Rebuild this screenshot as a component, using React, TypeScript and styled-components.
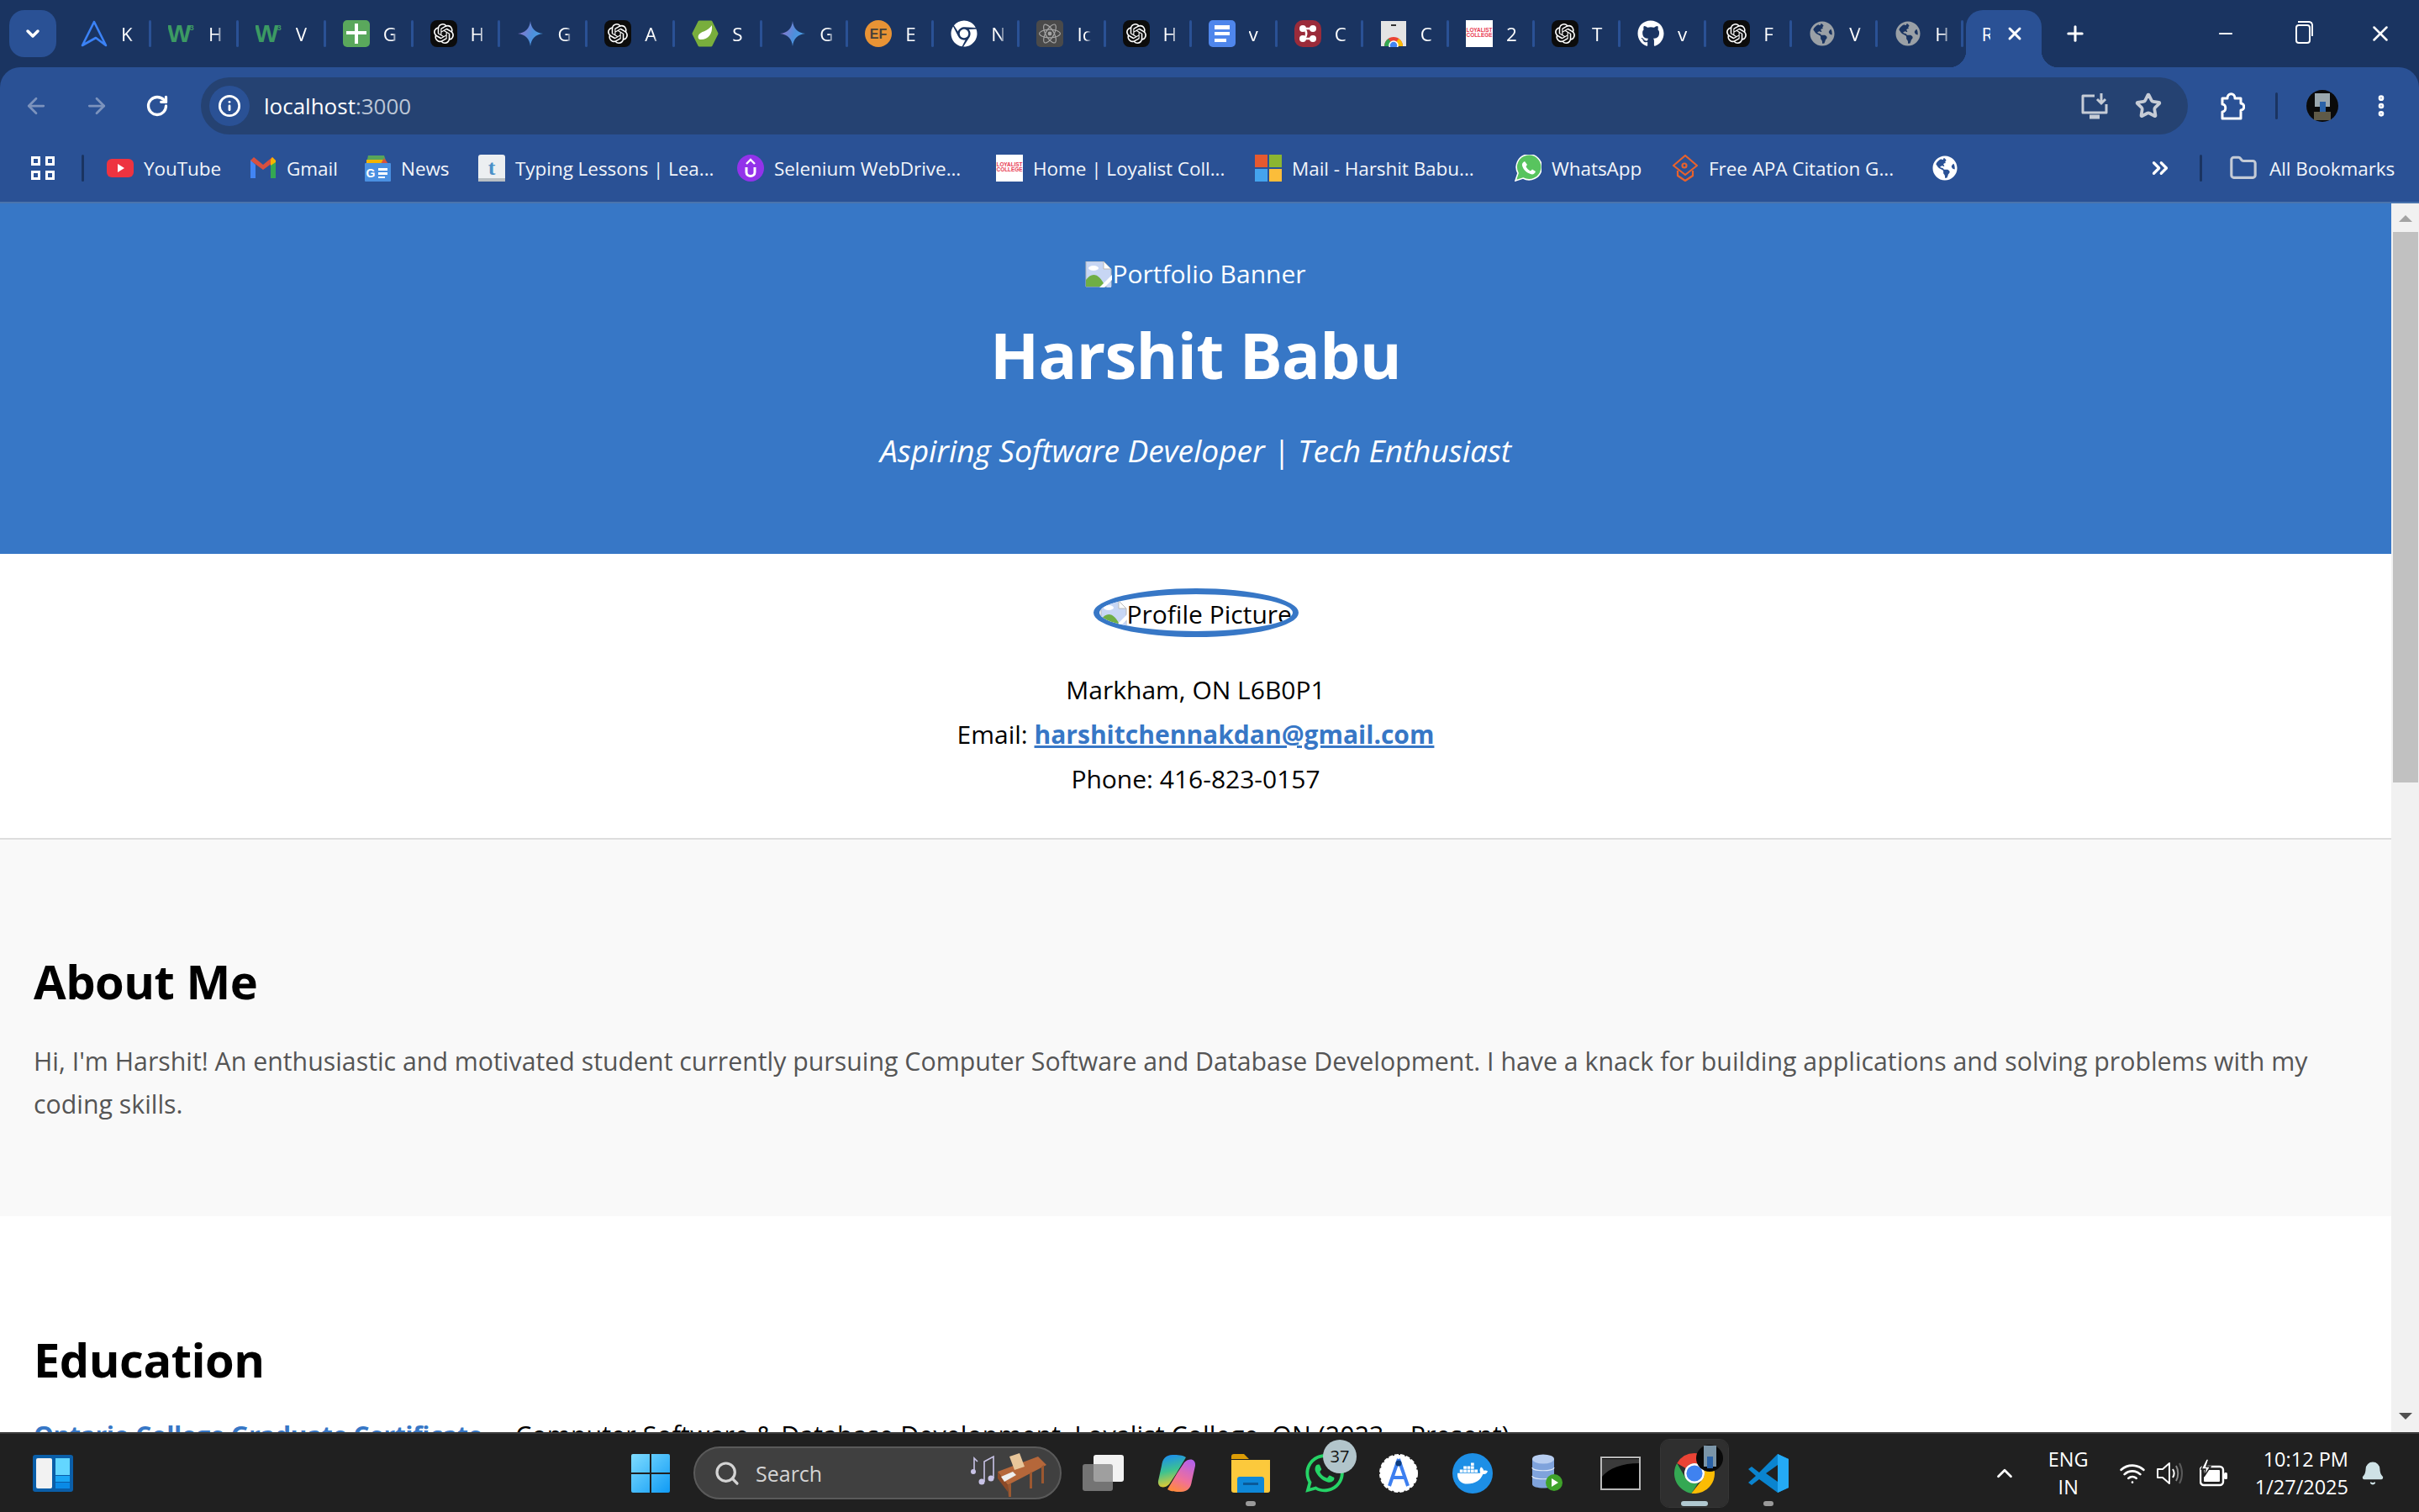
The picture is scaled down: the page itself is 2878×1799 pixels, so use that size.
import React from 'react';
import styled, { createGlobalStyle } from 'styled-components';
import {
  ArrowLeft,
  ArrowRight,
  Bell,
  ChevronDown,
  ChevronsRight,
  ChevronUp,
  EllipsisVertical,
  Folder,
  Info,
  RotateCw,
  Search,
  Star,
  Wifi,
  Minus,
  Plus,
  X,
} from 'lucide-react';
import { FaChrome, FaDocker, FaGithub, FaGlobeAmericas, FaWhatsapp } from 'react-icons/fa';
import { SiOpenai, SiReact } from 'react-icons/si';

const UI_FONT = '"Open Sans", "Noto Sans", sans-serif';

const GlobalStyle = createGlobalStyle`
  html, body {
    margin: 0;
    padding: 0;
    height: 100%;
    overflow: hidden;
    font-family: ${UI_FONT};
  }
  #root { height: 100%; }
`;

const Screen = styled.div`
  display: flex;
  flex-direction: column;
  width: 2878px;
  height: 1799px;
  overflow: hidden;
  background: #fff;
`;

/* ---------- tab strip ---------- */

const TabStrip = styled.div`
  display: flex;
  align-items: flex-end;
  height: 80px;
  flex: none;
  background: #1a3461;
`;

const TabSearchButton = styled.div`
  width: 56px;
  height: 56px;
  margin: 0 9px 12px 11px;
  flex: none;
  display: flex;
  align-items: center;
  justify-content: center;
  border-radius: 18px;
  background: #2a5195;
  color: #fff;
`;

const Tab = styled.div<{ $wide: boolean }>`
  display: flex;
  align-items: center;
  width: ${(p) => (p.$wide ? '103.9px' : '102.1px')};
  height: 80px;
  padding-left: 20px;
  box-sizing: border-box;
  flex: none;
`;

const TabIconSlot = styled.div`
  width: 32px;
  height: 32px;
  flex: none;
  display: flex;
  align-items: center;
  justify-content: center;
`;

const TabLabel = styled.div`
  width: 17px;
  margin-left: 16px;
  overflow: hidden;
  color: #fff;
  font-size: 22.5px;
  white-space: nowrap;
  mask-image: linear-gradient(to right, #000 65%, transparent);
`;

const TabSeparator = styled.div`
  width: 3px;
  height: 32px;
  margin-left: auto;
  border-radius: 2px;
  background: #2a5195;
`;

const ActiveTab = styled.div`
  position: relative;
  display: flex;
  align-items: center;
  width: 90px;
  height: 68px;
  margin-left: 3px;
  padding: 0 0 12px 18px;
  box-sizing: border-box;
  flex: none;
  border-radius: 20px 20px 0 0;
  background: #2a5195;
  color: #fff;

  &::before,
  &::after {
    content: '';
    position: absolute;
    bottom: 0;
    width: 20px;
    height: 20px;
  }
  &::before {
    left: -20px;
    background: radial-gradient(circle at 0 0, transparent 20px, #2a5195 20.5px);
  }
  &::after {
    right: -20px;
    background: radial-gradient(circle at 100% 0, transparent 20px, #2a5195 20.5px);
  }
`;

const ActiveTabLabel = styled.div`
  width: 11px;
  overflow: hidden;
  font-size: 22.5px;
  margin-right: 17px;
`;

const NewTabButton = styled.div`
  width: 56px;
  height: 80px;
  margin-left: 12px;
  display: flex;
  align-items: center;
  justify-content: center;
  color: #fff;
`;

const WindowControls = styled.div`
  display: flex;
  margin-left: auto;
  height: 80px;
`;

const WindowButton = styled.div`
  width: 92px;
  display: flex;
  align-items: center;
  justify-content: center;
  color: #fff;
`;

const RestoreGlyph = styled.div`
  position: relative;
  width: 14px;
  height: 19px;
  border: 2.5px solid #fff;
  border-radius: 4px;

  &::after {
    content: '';
    position: absolute;
    top: -6px;
    left: 1px;
    width: 16px;
    height: 16px;
    border-top: 2.5px solid #fff;
    border-right: 2.5px solid #fff;
    border-radius: 0 5px 0 0;
  }
`;

/* ---------- toolbar ---------- */

const ToolbarBacking = styled.div`
  background: #1a3461;
  flex: none;
`;

const Toolbar = styled.div`
  display: flex;
  align-items: center;
  height: 80px;
  padding: 12px 0 0 7px;
  box-sizing: border-box;
  background: #2a5195;
  border-radius: 24px 24px 0 0;
`;

const NavButton = styled.div<{ $off?: boolean }>`
  width: 72px;
  display: flex;
  justify-content: center;
  color: ${(p) => (p.$off ? '#7c93bd' : '#fff')};
`;

const AddressBar = styled.div`
  display: flex;
  align-items: center;
  width: 2364px;
  height: 68px;
  margin-left: 16px;
  padding: 0 31px 0 10px;
  box-sizing: border-box;
  flex: none;
  border-radius: 34px;
  background: #254272;
`;

const InfoChip = styled.div`
  width: 48px;
  height: 48px;
  display: flex;
  align-items: center;
  justify-content: center;
  border-radius: 24px;
  background: #2a5195;
  color: #fff;
`;

const UrlHost = styled.span`
  margin-left: 17px;
  color: #fff;
  font-size: 26px;
`;

const UrlPort = styled.span`
  color: #bcc6d6;
  font-size: 26px;
`;

const AddressActions = styled.div`
  display: flex;
  align-items: center;
  gap: 31px;
  margin-left: auto;
  color: #c6ccd6;
`;

const ToolbarActions = styled.div`
  display: flex;
  align-items: center;
  margin-left: 36px;
  color: #fff;
`;

const ToolbarDivider = styled.div`
  width: 3px;
  height: 32px;
  margin: 0 34px 0 36px;
  border-radius: 2px;
  background: #1a3461;
`;

const Kebab = styled.div`
  margin-left: 35px;
  display: flex;
`;

/* ---------- bookmarks ---------- */

const BookmarksBar = styled.div`
  display: flex;
  align-items: center;
  height: 82px;
  flex: none;
  box-sizing: border-box;
  padding-left: 37px;
  background: #2a5195;
  border-bottom: 2px solid #4a74ad;
`;

const AppsGrid = styled.div`
  display: grid;
  grid-template-columns: repeat(2, 11px);
  grid-auto-rows: 11px;
  gap: 6px;
`;

const AppsCell = styled.div`
  border: 3px solid #fff;
  box-sizing: border-box;
`;

const BarDivider = styled.div<{ $left: number; $right: number }>`
  width: 3px;
  height: 32px;
  margin: 0 ${(p) => p.$right}px 0 ${(p) => p.$left}px;
  border-radius: 2px;
  background: #1a3461;
`;

const BookmarkList = styled.div`
  display: flex;
  align-items: center;
  gap: 34px;
`;

const Bookmark = styled.div`
  display: flex;
  align-items: center;
  gap: 12px;
`;

const BookmarkText = styled.span<{ $w: number }>`
  width: ${(p) => p.$w}px;
  color: #f2f5fa;
  font-size: 22.5px;
  letter-spacing: -0.05px;
  white-space: nowrap;
`;

const OverflowButton = styled.div`
  margin-left: 226px;
  display: flex;
  color: #fff;
`;

const AllBookmarks = styled.div`
  display: flex;
  align-items: center;
  gap: 14px;
  color: #c4cbd6;
`;

/* ---------- page ---------- */

const Viewport = styled.div`
  display: flex;
  height: 1462px;
  flex: none;
  overflow: hidden;
`;

const Page = styled.main`
  width: 2845px;
  flex: none;
  color: #000;
  font-size: 30px;
  line-height: 53px;
`;

const Hero = styled.header`
  display: flex;
  flex-direction: column;
  align-items: center;
  height: 417px;
  box-sizing: border-box;
  padding-top: 67px;
  background: #3777c6;
  color: #fff;
`;

const BrokenIcon = styled.svg`
  width: 32px;
  height: 32px;
  flex: none;
`;

const AltImage = styled.div`
  display: flex;
  align-items: flex-end;
  height: 34px;
  line-height: 34px;
`;

const HeroName = styled.h1`
  margin: 29px 0 0;
  font-size: 76px;
  line-height: 100px;
  font-weight: 700;
  letter-spacing: -0.7px;
`;

const HeroTagline = styled.p`
  margin: 39px 0 0;
  font-size: 37.2px;
  line-height: 50px;
  font-style: italic;
  font-weight: 400;
  letter-spacing: -0.1px;
`;

const ProfileSection = styled.section`
  display: flex;
  flex-direction: column;
  align-items: center;
  height: 340px;
  box-sizing: border-box;
  padding-top: 41px;
  border-bottom: 2px solid #ddd;
`;

const ProfileOval = styled.div`
  display: flex;
  align-items: flex-start;
  width: 244px;
  height: 58px;
  box-sizing: border-box;
  padding: 8px 0 0 1px;
  border: 7px solid #3777c6;
  border-radius: 50%;
  overflow: hidden;
  line-height: 32px;
  white-space: nowrap;
`;

const ContactLines = styled.div`
  margin-top: 36px;
  text-align: center;
`;

const EmailLink = styled.a`
  color: #3777c6;
  font-weight: 700;
  text-decoration: underline;
`;

const Section = styled.section<{ $shaded?: boolean }>`
  padding: ${(p) => (p.$shaded ? '128px 40px 108px' : '130px 40px 0')};
  background: ${(p) => (p.$shaded ? '#f9f9f9' : '#fff')};
`;

const SectionTitle = styled.h2<{ $gap: number }>`
  margin: 0 0 ${(p) => p.$gap}px;
  font-size: 56px;
  line-height: 80px;
  font-weight: 700;
  letter-spacing: -0.5px;
`;

const Lead = styled.p`
  margin: 0;
  color: #555;
  font-size: 30.3px;
  line-height: 51.2px;
`;

const EducationLine = styled.p`
  margin: 0;
  font-size: 30.3px;
  letter-spacing: 0.1px;
`;

const Degree = styled.strong`
  margin-right: 16px;
  color: #3777c6;
  letter-spacing: -0.5px;
`;

const Scrollbar = styled.div`
  display: flex;
  flex-direction: column;
  align-items: center;
  width: 33px;
  flex: none;
  background: #f1f1f1;
`;

const ScrollArrow = styled.div<{ $down?: boolean }>`
  width: 0;
  height: 0;
  margin: ${(p) => (p.$down ? 'auto 0 15px' : '14px 0 0')};
  border-left: 8px solid transparent;
  border-right: 8px solid transparent;
  ${(p) => (p.$down ? 'border-top: 8px solid #505050;' : 'border-bottom: 8px solid #a3a3a3;')}
`;

const ScrollThumb = styled.div`
  width: 30px;
  height: 655px;
  margin: 12px 0 0 1px;
  background: #c1c1c1;
`;

/* ---------- taskbar ---------- */

const Taskbar = styled.footer`
  display: flex;
  align-items: center;
  height: 95px;
  flex: none;
  box-sizing: border-box;
  padding-left: 39px;
  background: #202020;
  border-top: 2px solid #3c3c3c;
  color: #fff;
`;

const WidgetsIcon = styled.svg`
  width: 48px;
  height: 44px;
  flex: none;
`;

const StartIcon = styled.svg`
  width: 46px;
  height: 46px;
  margin-left: 664px;
  flex: none;
`;

const SearchPill = styled.div`
  display: flex;
  align-items: center;
  justify-content: space-between;
  width: 438px;
  height: 63px;
  margin-left: 28px;
  padding: 0 16px 0 22px;
  box-sizing: border-box;
  flex: none;
  border: 2px solid #5a5a5a;
  border-radius: 32px;
  background: #404040;
`;

const SearchHint = styled.div`
  display: flex;
  align-items: center;
  gap: 18px;
  color: #d4d4d4;
  font-size: 25px;
`;

const TaskSlot = styled.div<{ $active?: boolean }>`
  position: relative;
  width: 80px;
  height: 80px;
  margin: 0 4px;
  flex: none;
  display: flex;
  align-items: center;
  justify-content: center;
  border-radius: 10px;
  background: ${(p) => (p.$active ? '#2f2f2f' : 'transparent')};
  outline: ${(p) => (p.$active ? '1px solid #363636' : 'none')};
`;

const TaskList = styled.div`
  display: flex;
  margin-left: 5px;
`;

const RunDot = styled.div<{ $wide?: boolean }>`
  position: absolute;
  left: 50%;
  bottom: 1px;
  width: ${(p) => (p.$wide ? '32px' : '12px')};
  height: 6px;
  transform: translateX(-50%);
  border-radius: 3px;
  background: ${(p) => (p.$wide ? '#b0c8d0' : '#9a9a9a')};
`;

const CountBadge = styled.div`
  position: absolute;
  top: 0;
  right: 2px;
  width: 40px;
  height: 40px;
  display: flex;
  align-items: center;
  justify-content: center;
  border-radius: 50%;
  background: #b2c5cb;
  color: #111;
  font-size: 20px;
`;

const AvatarOverlay = styled.svg`
  position: absolute;
  top: 6px;
  right: 6px;
  width: 32px;
  height: 32px;
`;

const Tray = styled.div`
  display: flex;
  align-items: center;
  margin-left: auto;
  padding-right: 40px;
  font-size: 23.5px;
`;

const TrayLang = styled.div`
  width: 60px;
  margin: 0 30px 0 31px;
  text-align: center;
  line-height: 33px;
`;

const TrayIcons = styled.div`
  display: flex;
  align-items: center;
  gap: 12px;
  margin-right: 32px;
`;

const VolumeIcon = styled.svg`
  margin-right: 6px;
`;

const Clock = styled.div`
  text-align: right;
  line-height: 33px;
`;

const BellWrap = styled.div`
  display: flex;
  margin-left: 14px;
  color: #cfe2e6;
`;

/* ---------- drawn icons ---------- */

const Rounded: React.FC<{ bg: string; children?: React.ReactNode }> = ({ bg, children }) => (
  <svg width="32" height="32" viewBox="0 0 32 32">
    <rect width="32" height="32" rx="5" fill={bg} />
    {children}
  </svg>
);

const KiroIcon = () => (
  <svg width="32" height="32" viewBox="0 0 32 32" fill="none" stroke="#3b82f6" strokeWidth="2.6" strokeLinejoin="round">
    <path d="M16 2 L2 30 L18 21 L30 30 Z" />
  </svg>
);

const W3Icon = () => (
  <svg width="34" height="32" viewBox="0 0 34 32">
    <text x="-1" y="27" fontFamily="Liberation Sans" fontWeight="700" fontSize="32" fill="#3c9a63">
      W
    </text>
    <text x="27" y="12" fontFamily="Liberation Sans" fontWeight="700" fontSize="10" fill="#3c9a63">
      3
    </text>
  </svg>
);

const PlusTile = () => (
  <Rounded bg="#5aa85c">
    <path d="M4 13h24v4H4zM14 4h4v24h-4z" fill="#fff" />
  </Rounded>
);

const OpenAiTile = () => (
  <svg width="32" height="32" viewBox="0 0 32 32">
    <rect width="32" height="32" rx="8" fill="#0c0c0c" />
    <foreignObject x="4" y="4" width="24" height="24">
      <SiOpenai size={24} color="#fff" />
    </foreignObject>
  </svg>
);

const GeminiStar = () => (
  <svg width="32" height="32" viewBox="0 0 32 32">
    <defs>
      <linearGradient id="gem" x1="0" y1="0.2" x2="1" y2="0.6">
        <stop offset="0" stopColor="#9b72cb" />
        <stop offset="0.6" stopColor="#4d8fdc" />
        <stop offset="1" stopColor="#4aa3e8" />
      </linearGradient>
    </defs>
    <path d="M16 1 C17 10 22 15 31 16 C22 17 17 22 16 31 C15 22 10 17 1 16 C10 15 15 10 16 1Z" fill="url(#gem)" />
  </svg>
);

const SpringTile = () => (
  <svg width="32" height="32" viewBox="0 0 32 32">
    <path d="M9 2 H23 L30 16 L23 30 H9 L2 16 Z" fill="#79ae3d" stroke="#79ae3d" strokeWidth="3" strokeLinejoin="round" />
    <path d="M24 6 C25 16 20 23 11 23 C8 23 7 21 8 18 C10 13 19 14 24 6Z" fill="#fff" />
  </svg>
);

const EfBadge = () => (
  <svg width="32" height="32" viewBox="0 0 32 32">
    <circle cx="16" cy="16" r="16" fill="#e89335" />
    <text x="16" y="22" textAnchor="middle" fontFamily="Liberation Sans" fontWeight="700" fontSize="16" fill="#45403a">
      EF
    </text>
  </svg>
);

const ReactTile = () => (
  <svg width="32" height="32" viewBox="0 0 32 32">
    <rect width="32" height="32" rx="5" fill="#4a4a4a" />
    <foreignObject x="3" y="3" width="26" height="26">
      <SiReact size={26} color="#a5a5a5" />
    </foreignObject>
  </svg>
);

const DocsTile = () => (
  <Rounded bg="#4f86ec">
    <path d="M7 6h18v5H7zM7 14h18v4H7zM7 22h14v4H7z" fill="#fff" />
  </Rounded>
);

const RedNodesTile = () => (
  <svg width="32" height="32" viewBox="0 0 32 32">
    <rect width="32" height="32" rx="10" fill="#9a2b3a" />
    <circle cx="10" cy="10" r="4" fill="#fff" />
    <circle cx="22" cy="10" r="4" fill="#fff" />
    <circle cx="10" cy="22" r="4" fill="#fff" />
    <circle cx="22" cy="22" r="4" fill="#fff" />
    <path d="M10 10h12M10 22h12M12 10c3 4 3 8 0 12" stroke="#fff" strokeWidth="2.5" fill="none" />
  </svg>
);

const WebStoreTile = () => (
  <svg width="32" height="32" viewBox="0 0 32 32">
    <rect x="1" y="1" width="30" height="30" fill="#e4e4e4" />
    <rect x="13" y="5" width="6" height="2" fill="#333" />
    <path d="M5 31 A11 11 0 0 1 27 31 Z" fill="#ea4335" />
    <path d="M5 31 A11 11 0 0 1 10 22 L16 31 Z" fill="#34a853" />
    <path d="M27 31 A11 11 0 0 0 22 22 L16 31 Z" fill="#fbbc04" />
    <circle cx="16" cy="30" r="5" fill="#4285f4" stroke="#fff" strokeWidth="1.5" />
  </svg>
);

const LoyalistTile = () => (
  <svg width="32" height="32" viewBox="0 0 32 32">
    <rect width="32" height="32" fill="#fff" />
    <text x="16" y="14" textAnchor="middle" fontFamily="Liberation Sans" fontWeight="700" fontSize="6.4" fill="#e8384f">
      LOYALIST
    </text>
    <text x="16" y="20" textAnchor="middle" fontFamily="Liberation Sans" fontWeight="700" fontSize="6.4" fill="#e8384f">
      COLLEGE
    </text>
  </svg>
);

const YouTubeIcon = () => (
  <svg width="32" height="32" viewBox="0 0 32 32">
    <rect y="5" width="32" height="22" rx="6" fill="#ee3340" />
    <path d="M13 11 L21 16 L13 21 Z" fill="#fff" />
  </svg>
);

const GmailIcon = () => (
  <svg width="32" height="32" viewBox="0 0 32 32">
    <path d="M1 6 V28 H7 V12 Z" fill="#4285f4" />
    <path d="M31 6 V28 H25 V12 Z" fill="#34a853" />
    <path d="M1 7 L16 18 L31 7 L27 3 L16 12 L5 3 Z" fill="#d8503f" />
    <path d="M27 3 L31 7 V9 L25 13 V6 Z" fill="#f4b400" />
  </svg>
);

const NewsIcon = () => (
  <svg width="32" height="32" viewBox="0 0 32 32">
    <path d="M5 1 H24 L27 10 H3 Z" fill="#57a55a" />
    <path d="M3 6 H22 L28 10 H3 Z" fill="#f4b400" />
    <path d="M24 4 L29 11 H20 Z" fill="#d8503f" />
    <rect x="1" y="10" width="31" height="22" rx="1" fill="#4a90e2" />
    <text x="8" y="27" textAnchor="middle" fontFamily="Liberation Sans" fontWeight="700" fontSize="14" fill="#fff">
      G
    </text>
    <path d="M17 16h11v3H17zM17 21h11v3H17zM17 26h8v2h-8z" fill="#fff" />
  </svg>
);

const TypingIcon = () => (
  <svg width="32" height="32" viewBox="0 0 32 32">
    <rect width="32" height="32" rx="3" fill="#eceff1" />
    <rect y="28" width="32" height="4" fill="#b9bfc3" />
    <text x="16" y="24" textAnchor="middle" fontFamily="Liberation Serif" fontWeight="700" fontSize="26" fill="#4a90c8">
      t
    </text>
  </svg>
);

const SeleniumIcon = () => (
  <svg width="32" height="32" viewBox="0 0 32 32">
    <circle cx="16" cy="16" r="16" fill="#9333ea" />
    <path d="M11 15 V21 C11 27 21 27 21 21 V15" fill="none" stroke="#fff" strokeWidth="3" />
    <path d="M11 11 L16 6 L21 11" fill="none" stroke="#fff" strokeWidth="2.4" />
  </svg>
);

const MicrosoftIcon = () => (
  <svg width="32" height="32" viewBox="0 0 32 32">
    <rect width="15" height="15" fill="#e5592f" />
    <rect x="17" width="15" height="15" fill="#8bb531" />
    <rect y="17" width="15" height="15" fill="#44a3ee" />
    <rect x="17" y="17" width="15" height="15" fill="#fbbd3a" />
  </svg>
);

const WhatsAppTile = () => (
  <svg width="32" height="32" viewBox="0 0 32 32">
    <path d="M1 31 L4 22 A15 15 0 1 1 10 28 Z" fill="#58c45e" stroke="#fff" strokeWidth="1.6" />
    <path d="M12 8 L15 12 L13.5 14 C14.5 16.5 16.5 18.5 19 19.5 L21 17.5 L25 20 C24 23 21.5 24 19 23 C14 21.5 10.5 18 9 13 C8.5 11 9.5 9 12 8Z" fill="#fff" />
  </svg>
);

const CapIcon = () => (
  <svg width="32" height="32" viewBox="0 0 32 32" fill="none" stroke="#e8622c" strokeWidth="2.2" strokeLinejoin="round">
    <path d="M16 1 L30 13 L16 24 L2 13 Z" />
    <path d="M7 19 V25 L16 31 L25 25 V19" />
    <circle cx="15" cy="13" r="2.5" />
  </svg>
);

const InstallIcon = () => (
  <svg width="34" height="34" viewBox="0 0 34 34" fill="none" stroke="currentColor" strokeWidth="3">
    <path d="M17 5 H3 V25 H31 V15" strokeLinejoin="round" />
    <path d="M11 30 H23" strokeWidth="5" />
    <path d="M25 2 V14 M20 9 L25 14 L30 9" />
  </svg>
);

const ExtensionIcon = () => (
  <svg width="32" height="36" viewBox="0 0 32 36" fill="none" stroke="#fff" strokeWidth="3" strokeLinejoin="round">
    <path d="M5 9 H11 C11 2 20 2 20 9 H27 V15 C32 15 32 23 27 23 V33 H5 V25 C10 25 10 16 5 16 Z" />
  </svg>
);

const VolumeTray = () => (
  <VolumeIcon width="34" height="32" viewBox="0 0 34 32" fill="none" stroke="#fff" strokeWidth="2" strokeLinejoin="round">
    <path d="M2 11 H8 L16 4 V28 L8 21 H2 Z" />
    <path d="M20 11 C22 14 22 18 20 21" />
    <path d="M24 7 C27 12 27 20 24 25" stroke="#8a8a8a" />
    <path d="M28 4 C32 11 32 21 28 28" stroke="#5a5a5a" />
  </VolumeIcon>
);

const BatteryTray = () => (
  <svg width="34" height="34" viewBox="0 0 34 34">
    <rect x="1" y="9" width="27" height="22" rx="4" fill="none" stroke="#fff" strokeWidth="2.4" />
    <rect x="5" y="13" width="19" height="14" rx="1" fill="#fff" />
    <rect x="29" y="16" width="4" height="8" rx="1.5" fill="#fff" />
    <path d="M8 0 L2 12 H7 L5 21 L13 9 H8 L11 0 Z" fill="#fff" stroke="#202020" strokeWidth="1.5" />
  </svg>
);

const BrokenImage = () => (
  <BrokenIcon viewBox="0 0 32 32">
    <path d="M1 0 H22 L31 9 V30 H1 Z" fill="#c7d6f4" stroke="#b9b9b9" />
    <path d="M22 0 V9 H31 Z" fill="#fff" stroke="#b9b9b9" />
    <path d="M1 30 V22 C8 12 17 14 24 30 Z" fill="#6fae45" />
    <ellipse cx="10" cy="8" rx="6" ry="3" fill="#fff" />
    <path d="M17 31 L32 16 V22 L23 31 Z" fill="#fff" />
    <path d="M25 31 L31 25 V31 Z" fill="#c7d6f4" />
  </BrokenIcon>
);

const ChromeLogo: React.FC<{ size: number }> = ({ size }) => (
  <svg width={size} height={size} viewBox="4 4 40 40">
    <path d="M24 4 A20 20 0 0 1 41.32 14 H24 A10 10 0 0 0 15.34 19 L6.68 14 A20 20 0 0 1 24 4Z" fill="#ea4335" />
    <path d="M6.68 14 L15.34 29 A10 10 0 0 0 28 33 L21 43.8 A20 20 0 0 1 6.68 14Z" fill="#34a853" />
    <path d="M41.32 14 A20 20 0 0 1 21 43.8 L32.66 29 A10 10 0 0 0 24 14 Z" fill="#fbbc04" />
    <circle cx="24" cy="24" r="10" fill="#fff" />
    <circle cx="24" cy="24" r="8" fill="#3f82f0" />
  </svg>
);

const tabs: { icon: React.ReactNode; label: string }[] = [
  { icon: <KiroIcon />, label: 'K' },
  { icon: <W3Icon />, label: 'H' },
  { icon: <W3Icon />, label: 'V' },
  { icon: <PlusTile />, label: 'G' },
  { icon: <OpenAiTile />, label: 'H' },
  { icon: <GeminiStar />, label: 'G' },
  { icon: <OpenAiTile />, label: 'A' },
  { icon: <SpringTile />, label: 'S' },
  { icon: <GeminiStar />, label: 'G' },
  { icon: <EfBadge />, label: 'E' },
  { icon: <FaChrome size={32} color="#fff" />, label: 'N' },
  { icon: <ReactTile />, label: 'Ic' },
  { icon: <OpenAiTile />, label: 'H' },
  { icon: <DocsTile />, label: 'v' },
  { icon: <RedNodesTile />, label: 'C' },
  { icon: <WebStoreTile />, label: 'C' },
  { icon: <LoyalistTile />, label: '2' },
  { icon: <OpenAiTile />, label: 'T' },
  { icon: <FaGithub size={32} color="#fff" />, label: 'v' },
  { icon: <OpenAiTile />, label: 'F' },
  { icon: <FaGlobeAmericas size={30} color="#9aa0a6" />, label: 'V' },
  { icon: <FaGlobeAmericas size={30} color="#9aa0a6" />, label: 'H' },
];

const bookmarks: { icon: React.ReactNode; text?: string; w?: number }[] = [
  { icon: <YouTubeIcon />, text: 'YouTube', w: 92 },
  { icon: <GmailIcon />, text: 'Gmail', w: 58 },
  { icon: <NewsIcon />, text: 'News', w: 58 },
  { icon: <TypingIcon />, text: 'Typing Lessons | Lea...', w: 230 },
  { icon: <SeleniumIcon />, text: 'Selenium WebDrive...', w: 230 },
  { icon: <LoyalistTile />, text: 'Home | Loyalist Coll...', w: 230 },
  { icon: <MicrosoftIcon />, text: 'Mail - Harshit Babu...', w: 231 },
  { icon: <WhatsAppTile />, text: 'WhatsApp', w: 109 },
  { icon: <CapIcon />, text: 'Free APA Citation G...', w: 232 },
  { icon: <FaGlobeAmericas size={30} color="#fff" /> },
];

const App: React.FC = () => {
  return (
    <Screen>
      <GlobalStyle />

      <TabStrip>
        <TabSearchButton>
          <ChevronDown size={24} strokeWidth={3.5} />
        </TabSearchButton>
        {tabs.map((t, i) => (
          <Tab key={i} $wide={i < 8}>
            <TabIconSlot>{t.icon}</TabIconSlot>
            <TabLabel>{t.label}</TabLabel>
            <TabSeparator />
          </Tab>
        ))}
        <ActiveTab>
          <ActiveTabLabel>React</ActiveTabLabel>
          <X size={24} strokeWidth={3} />
        </ActiveTab>
        <NewTabButton>
          <Plus size={28} strokeWidth={2.6} />
        </NewTabButton>
        <WindowControls>
          <WindowButton>
            <Minus size={24} strokeWidth={2.2} />
          </WindowButton>
          <WindowButton>
            <RestoreGlyph />
          </WindowButton>
          <WindowButton>
            <X size={30} strokeWidth={2} />
          </WindowButton>
        </WindowControls>
      </TabStrip>

      <ToolbarBacking>
        <Toolbar>
          <NavButton $off>
            <ArrowLeft size={30} strokeWidth={2.2} />
          </NavButton>
          <NavButton $off>
            <ArrowRight size={30} strokeWidth={2.2} />
          </NavButton>
          <NavButton>
            <RotateCw size={28} strokeWidth={2.8} />
          </NavButton>
          <AddressBar>
            <InfoChip>
              <Info size={28} strokeWidth={2.4} />
            </InfoChip>
            <UrlHost>localhost</UrlHost>
            <UrlPort>:3000</UrlPort>
            <AddressActions>
              <InstallIcon />
              <Star size={32} strokeWidth={2.8} />
            </AddressActions>
          </AddressBar>
          <ToolbarActions>
            <ExtensionIcon />
            <ToolbarDivider />
            <svg width="38" height="38" viewBox="0 0 38 38">
              <circle cx="19" cy="19" r="19" fill="#0a0a0a" />
              <path d="M10 4 H28 V20 H10 Z" fill="#9aa7ae" />
              <path d="M16 14 H23 V28 H16 Z" fill="#2a62a8" />
              <path d="M9 26 H29 V36 H9 Z" fill="#5f5a48" />
            </svg>
            <Kebab>
              <EllipsisVertical size={32} strokeWidth={3} />
            </Kebab>
          </ToolbarActions>
        </Toolbar>
      </ToolbarBacking>

      <BookmarksBar>
        <AppsGrid>
          <AppsCell />
          <AppsCell />
          <AppsCell />
          <AppsCell />
        </AppsGrid>
        <BarDivider $left={32} $right={27} />
        <BookmarkList>
          {bookmarks.map((b, i) => (
            <Bookmark key={i}>
              {b.icon}
              {b.text && <BookmarkText $w={b.w ?? 0}>{b.text}</BookmarkText>}
            </Bookmark>
          ))}
        </BookmarkList>
        <OverflowButton>
          <ChevronsRight size={30} strokeWidth={2.6} />
        </OverflowButton>
        <BarDivider $left={32} $right={32} />
        <AllBookmarks>
          <Folder size={34} strokeWidth={2.2} />
          <BookmarkText $w={152}>All Bookmarks</BookmarkText>
        </AllBookmarks>
      </BookmarksBar>

      <Viewport>
        <Page>
          <Hero>
            <AltImage>
              <BrokenImage />
              Portfolio Banner
            </AltImage>
            <HeroName>Harshit Babu</HeroName>
            <HeroTagline>Aspiring Software Developer | Tech Enthusiast</HeroTagline>
          </Hero>

          <ProfileSection>
            <ProfileOval>
              <BrokenImage />
              Profile Picture
            </ProfileOval>
            <ContactLines>
              Markham, ON L6B0P1
              <br />
              Email: <EmailLink href="#">harshitchennakdan@gmail.com</EmailLink>
              <br />
              Phone: 416-823-0157
            </ContactLines>
          </ProfileSection>

          <Section $shaded>
            <SectionTitle $gap={30}>About Me</SectionTitle>
            <Lead>
              Hi, I'm Harshit! An enthusiastic and motivated student currently pursuing Computer Software and
              Database Development. I have a knack for building applications and solving problems with my coding
              skills.
            </Lead>
          </Section>

          <Section>
            <SectionTitle $gap={24}>Education</SectionTitle>
            <EducationLine>
              <Degree>Ontario College Graduate Certificate</Degree>– Computer Software &amp; Database Development,
              Loyalist College, ON (2023 – Present)
            </EducationLine>
          </Section>
        </Page>

        <Scrollbar>
          <ScrollArrow />
          <ScrollThumb />
          <ScrollArrow $down />
        </Scrollbar>
      </Viewport>

      <Taskbar>
        <WidgetsIcon viewBox="0 0 48 44">
          <rect width="48" height="44" rx="3" fill="#0a5ea8" />
          <rect x="4" y="4" width="19" height="36" rx="2" fill="#f2f2f2" />
          <rect x="27" y="4" width="17" height="20" fill="#63d6ff" />
          <rect x="27" y="25" width="17" height="7" fill="#19a6f5" />
          <rect x="27" y="33" width="17" height="7" fill="#0a8ae6" />
        </WidgetsIcon>
        <StartIcon viewBox="0 0 46 46">
          <defs>
            <linearGradient id="win" x1="0" y1="0" x2="1" y2="1">
              <stop offset="0" stopColor="#7fdcff" />
              <stop offset="1" stopColor="#0f9bf5" />
            </linearGradient>
          </defs>
          <path d="M0 2 a2 2 0 0 1 2-2 H22 V22 H0 Z M24 0 H44 a2 2 0 0 1 2 2 V22 H24 Z M0 24 H22 V46 H2 a2 2 0 0 1-2-2 Z M24 24 H46 V44 a2 2 0 0 1-2 2 H24 Z" fill="url(#win)" />
        </StartIcon>
        <SearchPill>
          <SearchHint>
            <Search size={32} strokeWidth={2.4} />
            Search
          </SearchHint>
          <svg width="90" height="56" viewBox="0 0 90 56">
            <g fill="#c8c3e6">
              <circle cx="3" cy="26" r="3" />
              <circle cx="13" cy="38" r="3.5" />
              <circle cx="24" cy="34" r="3.5" />
            </g>
            <path d="M4 26 V10 L8 14 M16 38 V14 L27 8 V34" fill="none" stroke="#c8c3e6" strokeWidth="1.6" />
            <path d="M32 26 L80 8 L90 18 L44 42 Z" fill="#b5673a" />
            <path d="M46 8 L58 4 L64 20 L52 24 Z" fill="#e8c69a" />
            <path d="M32 26 L44 42 V50 L32 34 Z" fill="#8d4a27" />
            <path d="M36 32 L50 26 L54 30 L40 38 Z" fill="#eee" />
            <path d="M44 42 L48 40 V56 H45 Z M84 20 L87 18 V40 H84 Z M70 28 L73 26 V46 H70 Z" fill="#9c5830" />
          </svg>
        </SearchPill>
        <TaskList>
          <TaskSlot>
            <svg width="50" height="46" viewBox="0 0 50 46">
              <rect x="14" y="1" width="36" height="32" rx="3" fill="#f2f2f2" />
              <rect x="1" y="12" width="36" height="32" rx="3" fill="#8a8a8a" fillOpacity="0.8" />
            </svg>
          </TaskSlot>
          <TaskSlot>
            <svg width="46" height="46" viewBox="0 0 46 46">
              <defs>
                <linearGradient id="cop1" x1="0.3" y1="0" x2="0.5" y2="1">
                  <stop offset="0" stopColor="#1b8df0" />
                  <stop offset="0.5" stopColor="#3ec38f" />
                  <stop offset="1" stopColor="#f5c928" />
                </linearGradient>
                <linearGradient id="cop2" x1="0.7" y1="0" x2="0.3" y2="1">
                  <stop offset="0" stopColor="#b561e8" />
                  <stop offset="0.6" stopColor="#f0709a" />
                  <stop offset="1" stopColor="#ff8a3c" />
                </linearGradient>
              </defs>
              <path d="M18 1 C10 1 6 6 5 14 L1 32 C0 40 8 42 14 36 L22 24 L34 4 C30 1 24 1 18 1Z" fill="url(#cop1)" />
              <path d="M28 45 C36 45 40 40 41 32 L45 14 C46 6 38 4 32 10 L24 22 L12 42 C16 45 22 45 28 45Z" fill="url(#cop2)" />
            </svg>
          </TaskSlot>
          <TaskSlot>
            <svg width="48" height="46" viewBox="0 0 48 46">
              <path d="M1 3 a3 3 0 0 1 3-3 H16 L22 6 H1 Z" fill="#dd9d06" />
              <path d="M1 7 H47 V43 a3 3 0 0 1-3 3 H4 a3 3 0 0 1-3-3 Z" fill="#fcc93c" />
              <path d="M8 46 V30 a3 3 0 0 1 3-3 H37 a3 3 0 0 1 3 3 V46 Z" fill="#0e88d8" />
              <rect x="15" y="34" width="18" height="3" fill="#0a5a98" />
            </svg>
            <RunDot />
          </TaskSlot>
          <TaskSlot>
            <FaWhatsapp size={52} color="#25d366" />
            <CountBadge>37</CountBadge>
          </TaskSlot>
          <TaskSlot>
            <svg width="46" height="46" viewBox="0 0 46 46">
              <circle cx="23" cy="23" r="22" fill="#fff" stroke="#fff" strokeWidth="2" strokeDasharray="5 2" />
              <path d="M23 6 L12 38 M23 6 L34 38 M15 28 H31" stroke="#3d7ff0" strokeWidth="4" fill="none" />
              <circle cx="23" cy="11" r="3.5" fill="#0b3b7c" />
            </svg>
          </TaskSlot>
          <TaskSlot>
            <svg width="48" height="48" viewBox="0 0 48 48">
              <circle cx="24" cy="24" r="24" fill="#1d8fe6" />
              <foreignObject x="6" y="6" width="36" height="36">
                <FaDocker size={36} color="#fff" />
              </foreignObject>
            </svg>
          </TaskSlot>
          <TaskSlot>
            <svg width="38" height="46" viewBox="0 0 38 46">
              <path d="M2 6 V36 C2 42 28 42 28 36 V6 Z" fill="#7fa3dc" />
              <ellipse cx="15" cy="6" rx="13" ry="5.5" fill="#b7cdf0" />
              <path d="M2 16 C2 21 28 21 28 16 M2 26 C2 31 28 31 28 26" fill="none" stroke="#dfe9f8" strokeWidth="1.2" />
              <circle cx="28" cy="34" r="10" fill="#3fa32a" />
              <path d="M25 29 L33 34 L25 39 Z" fill="#fff" />
            </svg>
          </TaskSlot>
          <TaskSlot>
            <svg width="48" height="40" viewBox="0 0 48 40">
              <rect x="1" y="1" width="46" height="38" fill="#000" stroke="#b8b8b8" strokeWidth="2" />
              <path d="M2 3 H46 V8 C26 8 10 14 2 24 Z" fill="#3a3a3a" />
            </svg>
          </TaskSlot>
          <TaskSlot $active>
            <ChromeLogo size={48} />
            <AvatarOverlay viewBox="0 0 32 32">
              <circle cx="16" cy="16" r="16" fill="#0a0a0a" />
              <path d="M9 1 H24 V26 H9 Z" fill="#7b95a8" />
              <path d="M13 14 H20 V28 H13 Z" fill="#2a62a8" />
            </AvatarOverlay>
            <RunDot $wide />
          </TaskSlot>
          <TaskSlot>
            <svg width="48" height="48" viewBox="0 0 48 48">
              <path d="M35 1 L13 23 L4 16 L0 19 L9 27 L0 35 L4 38 L13 31 L35 47 L48 41 V7 Z" fill="#0a84cf" />
              <path d="M35 1 L48 7 V41 L35 47 Z" fill="#24aaf5" />
              <path d="M35 14 V34 L21 24 Z" fill="#202020" />
            </svg>
            <RunDot />
          </TaskSlot>
        </TaskList>
        <Tray>
          <ChevronUp size={30} strokeWidth={2.2} />
          <TrayLang>
            ENG
            <br />
            IN
          </TrayLang>
          <TrayIcons>
            <Wifi size={32} strokeWidth={2} />
            <VolumeTray />
            <BatteryTray />
          </TrayIcons>
          <Clock>
            10:12 PM
            <br />
            1/27/2025
          </Clock>
          <BellWrap>
            <Bell size={30} fill="#cfe2e6" strokeWidth={1.5} />
          </BellWrap>
        </Tray>
      </Taskbar>
    </Screen>
  );
};

export default App;
